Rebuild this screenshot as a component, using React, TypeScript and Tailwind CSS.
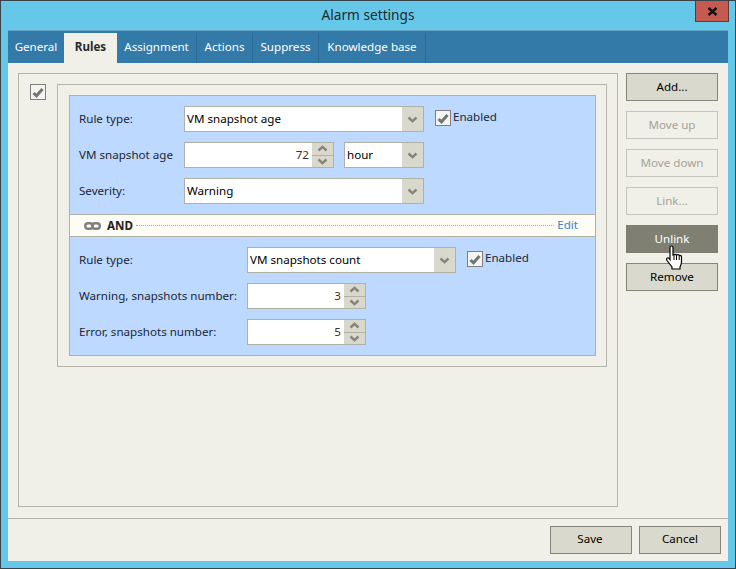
import type { ReactNode } from "react";

const tabs = ["General", "Rules", "Assignment", "Actions", "Suppress", "Knowledge base"];
const tabWidths = ["w-[56px]", "w-[53px]", "w-[80px]", "w-[56px]", "w-[66px]", "w-[107px]"];

function Chevron({ up = false }: { up?: boolean }) {
  return (
    <svg width="11" height="7" viewBox="0 0 11 7" className={up ? "rotate-180" : ""}>
      <path d="M1.500 1.500 5.500 5.200 9.500 1.500" fill="none" stroke="#85857a" strokeWidth="2.400" />
    </svg>
  );
}

function Check() {
  return (
    <div className="flex h-4 w-4 shrink-0 items-center justify-center border border-[#7f7f7f] bg-[#f4f4f0]">
      <svg width="12" height="11" viewBox="0 0 12 11">
        <path d="M1.500 6 4.500 8.800 10.500 2" fill="none" stroke="#747474" strokeWidth="3" />
      </svg>
    </div>
  );
}

function Enabled() {
  return (
    <div className="ml-[11px] flex items-center gap-[2px] self-start pt-[4px]">
      <Check />
      <span className="-mt-[2px] text-[#1c2733]">Enabled</span>
    </div>
  );
}

function Select({ value, width }: { value: string; width: string }) {
  return (
    <div className={`flex h-[26px] items-stretch border border-[#b0b0a4] bg-white ${width}`}>
      <span className="flex-1 pl-[2px] leading-[24px] text-black">{value}</span>
      <div className="flex w-[21px] items-center justify-center bg-[#d8d8cc]">
        <Chevron />
      </div>
    </div>
  );
}

function Spin({ value, width }: { value: string; width: string }) {
  return (
    <div className={`flex h-[26px] items-stretch border border-[#b0b0a4] bg-white ${width}`}>
      <span className="flex-1 pr-[3px] text-right leading-[24px] text-[#333]">{value}</span>
      <div className="flex w-[21px] flex-col bg-[#d8d8cc]">
        <div className="flex flex-1 items-center justify-center border-b border-[#b0b0a4]">
          <Chevron up />
        </div>
        <div className="flex flex-1 items-center justify-center">
          <Chevron />
        </div>
      </div>
    </div>
  );
}

function Row({ label, labelWidth, children }: { label: string; labelWidth: string; children: ReactNode }) {
  return (
    <div className="flex items-center">
      <span className={`whitespace-nowrap text-[#1c2733] ${labelWidth}`}>{label}</span>
      {children}
    </div>
  );
}

function SideButton({ label, kind = "normal" }: { label: string; kind?: "normal" | "disabled" | "active" }) {
  const look = {
    normal: "border-[#85857a] bg-[#d9d9cd] text-black",
    disabled: "border-[#c4c4ba] bg-[#f0f0e8] text-[#a3a39b]",
    active: "border-[#808072] bg-[#808072] text-white",
  }[kind];
  return (
    <button className={`h-[28px] w-[92px] border ${look}`}>{label}</button>
  );
}

export default function App() {
  return (
    <div className="relative h-[569px] w-[736px] overflow-hidden border border-[#37444c] bg-[#65c8e9] font-['Noto_Sans',sans-serif] text-[11.6px]">
      <div className="flex h-[29px] items-center justify-center text-[13.7px] text-[#20292e]">Alarm settings</div>

      <div className="absolute right-[6px] top-0 flex h-[21px] w-[34px] items-center justify-center border border-[#5a3b3b] border-t-0 bg-[#c55a50]">
        <svg width="11" height="9" viewBox="0 0 11 9">
          <path d="M1.500 1 9.500 8M9.500 1 1.500 8" stroke="#111" strokeWidth="2.400" />
        </svg>
      </div>

      <div className="mx-[7px] flex h-[531px] flex-col bg-[#f0f0e8]">
        <div className="flex h-[33px] items-end border-t border-[#5fa3c4] bg-[#337aa8] pt-[2px] text-white">
          {tabs.map((t, i) => (
            <div
              key={t}
              className={`flex h-[30px] items-center justify-center pb-[2px] ${tabWidths[i]} ${
                t === "Rules" ? "bg-[#f0f0e8] font-bold text-[#2a2a2a]" : i > 1 ? "border-r border-[#2b6b98]" : ""
              }`}
            >
              {t}
            </div>
          ))}
        </div>

        <div className="flex flex-1 gap-2 px-[10px] pt-[10px]">
          <div className="flex h-[434px] w-[600px] gap-[11px] border border-[#b4b4aa] pl-[11px] pt-[10px]">
            <Check />
            <div className="h-[283px] w-[550px] border border-[#b4b4aa] pl-[11px] pr-[10px] pt-[10px]">
              <div className="border border-[#b0b0a4] bg-[#bdd9ff]">
                <div className="flex flex-col gap-[10px] pb-[10px] pl-[9px] pr-[10px] pt-[10px]">
                  <div className="flex">
                    <Row label="Rule type:" labelWidth="w-[105px]">
                      <Select value="VM snapshot age" width="w-[240px]" />
                    </Row>
                    <Enabled />
                  </div>
                  <Row label="VM snapshot age" labelWidth="w-[105px]">
                    <Spin value="72" width="w-[150px]" />
                    <div className="ml-[10px]">
                      <Select value="hour" width="w-[80px]" />
                    </div>
                  </Row>
                  <Row label="Severity:" labelWidth="w-[105px]">
                    <Select value="Warning" width="w-[240px]" />
                  </Row>
                </div>

                <div className="flex h-[23px] items-center border-y border-[#b0b0a4] bg-[#fdfdf5] pl-[14px] pr-[17px]">
                  <svg width="17" height="8" viewBox="0 0 17 8">
                    <rect x="1.200" y="1.200" width="7.500" height="5.600" rx="2.800" fill="none" stroke="#808080" strokeWidth="2.400" />
                    <rect x="8.300" y="1.200" width="7.500" height="5.600" rx="2.800" fill="none" stroke="#808080" strokeWidth="2.400" />
                  </svg>
                  <span className="ml-[6px] font-bold text-[#222]">AND</span>
                  <div className="mx-[3px] flex-1 border-t border-dotted border-[#a8a8a0]" />
                  <span className="-mt-[2px] text-[#3f80c9]">Edit</span>
                </div>

                <div className="flex flex-col gap-[10px] pb-[10px] pl-[9px] pr-[10px] pt-[10px]">
                  <div className="flex">
                    <Row label="Rule type:" labelWidth="w-[168px]">
                      <Select value="VM snapshots count" width="w-[209px]" />
                    </Row>
                    <Enabled />
                  </div>
                  <Row label="Warning, snapshots number:" labelWidth="w-[168px]">
                    <Spin value="3" width="w-[119px]" />
                  </Row>
                  <Row label="Error, snapshots number:" labelWidth="w-[168px]">
                    <Spin value="5" width="w-[119px]" />
                  </Row>
                </div>
              </div>
            </div>
          </div>

          <div className="flex flex-col gap-[10px]">
            <SideButton label="Add..." />
            <SideButton label="Move up" kind="disabled" />
            <SideButton label="Move down" kind="disabled" />
            <SideButton label="Link..." kind="disabled" />
            <SideButton label="Unlink" kind="active" />
            <SideButton label="Remove" />
          </div>
        </div>

        <div className="flex h-[43px] justify-end gap-[7px] border-t border-[#b4b4aa] pr-[7px] pt-[7px]">
          <button className="h-[28px] w-[82px] border border-[#85857a] bg-[#d9d9cd] pb-[2px] pr-[2px] text-black">Save</button>
          <button className="h-[28px] w-[82px] border border-[#85857a] bg-[#d9d9cd] pb-[2px] text-black">Cancel</button>
        </div>
      </div>

      {/* pointer over the Unlink button */}
      <svg className="absolute left-[664px] top-[244px]" width="20" height="25" viewBox="0 0 20 25">
        <path
          d="M5 2.500c0-2 3-2 3 0V10l1-.5c1-.4 2 0 2.500.5 1-.6 2.200-.3 2.700.5 1-.4 2.300.2 2.300 1.500V17c0 2-.7 3.500-1.500 5v2H7v-2L2 15.500c-1.200-2 .8-3.500 2-2.200L5 14.500V2.500Z"
          fill="#fff"
          stroke="#000"
          strokeWidth="1.200"
        />
        <path d="M9 10v5M11.500 10v5M14.200 11v4" stroke="#000" strokeWidth="1" fill="none" />
      </svg>
    </div>
  );
}
